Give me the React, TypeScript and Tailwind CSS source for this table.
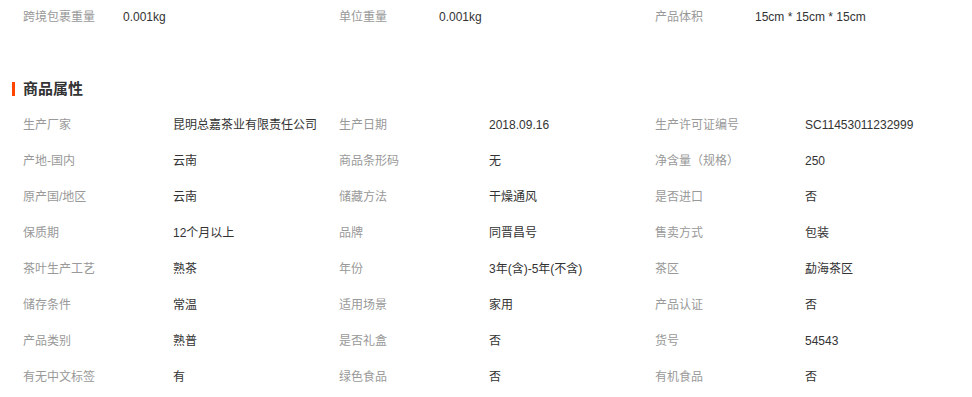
import React from "react";

const top: [string, string][] = [
  ["跨境包裹重量", "0.001kg"],
  ["单位重量", "0.001kg"],
  ["产品体积", "15cm * 15cm * 15cm"],
];

const rows: [string, string][][] = [
  [["生产厂家", "昆明总嘉茶业有限责任公司"], ["生产日期", "2018.09.16"], ["生产许可证编号", "SC11453011232999"]],
  [["产地-国内", "云南"], ["商品条形码", "无"], ["净含量（规格）", "250"]],
  [["原产国/地区", "云南"], ["储藏方法", "干燥通风"], ["是否进口", "否"]],
  [["保质期", "12个月以上"], ["品牌", "同晋昌号"], ["售卖方式", "包装"]],
  [["茶叶生产工艺", "熟茶"], ["年份", "3年(含)-5年(不含)"], ["茶区", "勐海茶区"]],
  [["储存条件", "常温"], ["适用场景", "家用"], ["产品认证", "否"]],
  [["产品类别", "熟普"], ["是否礼盒", "否"], ["货号", "54543"]],
  [["有无中文标签", "有"], ["绿色食品", "否"], ["有机食品", "否"]],
];

export default function App() {
  return (
    <div className="w-[972px] h-[397px] bg-white text-[12px] font-['Liberation_Sans','Noto_Sans_CJK_SC',sans-serif] overflow-hidden">
      <div className="flex h-[34px] items-center pl-[23px]">
        {top.map(([l, v]) => (
          <div key={l} className="flex w-[316px] items-center">
            <span className="w-[100px] text-[#999]">{l}</span>
            <span className="text-[#333]">{v}</span>
          </div>
        ))}
      </div>
      <div className="h-[38px]" />
      <div className="flex h-[34px] items-center pl-[12px]">
        <div className="w-[3px] h-[14px] bg-[#ff4400] mr-[8px]" />
        <span className="text-[15px] font-bold text-[#333]">商品属性</span>
      </div>
      <div className="pl-[23px] pt-[1px]">
        {rows.map((r, i) => (
          <div key={i} className="flex h-[36px] items-center">
            {r.map(([l, v]) => (
              <div key={l} className="flex w-[316px] items-center">
                <span className="w-[150px] text-[#999]">{l}</span>
                <span className="text-[#333]">{v}</span>
              </div>
            ))}
          </div>
        ))}
      </div>
    </div>
  );
}
